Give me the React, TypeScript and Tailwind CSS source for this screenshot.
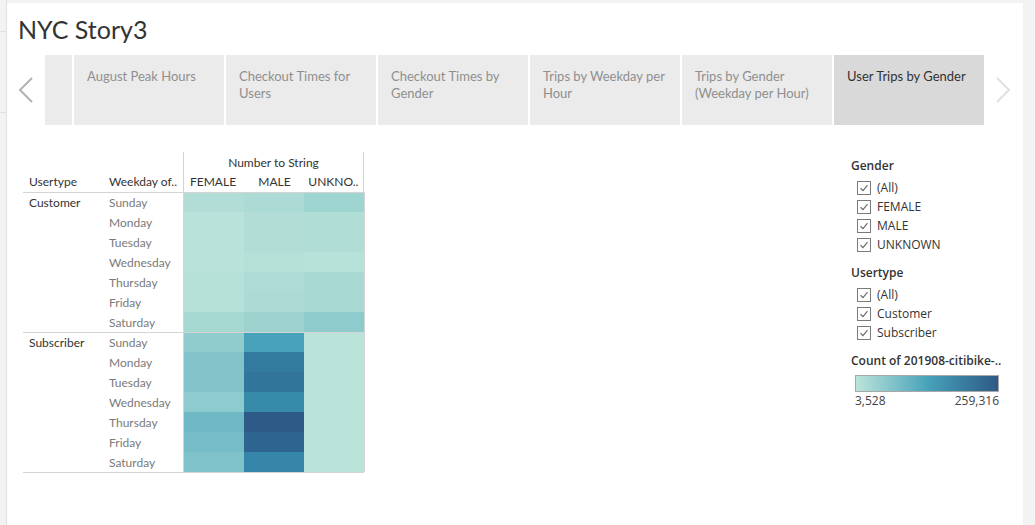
import React from 'react';

const tabs = [
  'August Peak Hours',
  'Checkout Times for Users',
  'Checkout Times by Gender',
  'Trips by Weekday per Hour',
  'Trips by Gender (Weekday per Hour)',
  'User Trips by Gender',
];

const days = ['Sunday', 'Monday', 'Tuesday', 'Wednesday', 'Thursday', 'Friday', 'Saturday'];

// [female, male, unknown] per weekday
const groups = [
  {
    name: 'Customer',
    cells: [
      ['#b2ddd6', '#acdbd5', '#9fd5d1'],
      ['#b9e3da', '#b2ddd6', '#b0ddd6'],
      ['#b9e3da', '#b1ddd6', '#b0ddd6'],
      ['#b9e3da', '#b4e0d8', '#b7e2d9'],
      ['#b6e1d8', '#addbd5', '#a9d9d3'],
      ['#b5e1d8', '#acdbd5', '#a9d9d3'],
      ['#a6d8d2', '#9dd2cf', '#8ecbcd'],
    ],
  },
  {
    name: 'Subscriber',
    cells: [
      ['#90cbce', '#48a3ba', '#bae4da'],
      ['#82c4ca', '#327a9e', '#bae4da'],
      ['#82c4ca', '#31759a', '#bae4da'],
      ['#8ecbcf', '#368aaa', '#bae4da'],
      ['#6fb9c6', '#2d5a86', '#bae4da'],
      ['#76bdc8', '#2e6590', '#bae4da'],
      ['#7fc2ca', '#3686aa', '#bae4da'],
    ],
  },
];

function Check({ label }: { label: string }) {
  return (
    <div className="flex items-center h-[19px] pl-[6px] gap-[6px]">
      <svg width="14" height="14" viewBox="0 0 14 14">
        <rect x="0.5" y="0.5" width="13" height="13" fill="white" stroke="#7a7a7a" />
        <path d="M3.5 7.2 L6 9.6 L10.5 4.2" fill="none" stroke="#6b6b6b" strokeWidth="1.2" />
      </svg>
      <span className="text-[12px] text-[#333]">{label}</span>
    </div>
  );
}

export default function App() {
  return (
    <div className="h-[525px] w-full flex bg-[#f3f3f3]" style={{ fontFamily: '"Open Sans", sans-serif' }}>
      {/* left rail */}
      <div className="w-[7px] shrink-0 border-r border-[#e0e0e0] flex flex-col">
        <div className="h-[32px] border-b border-[#e0e0e0]" />
        <div className="h-[81px] border-b border-[#e0e0e0]" />
      </div>

      <div className="flex-1 mt-[3px] bg-white flex flex-col">
        <h1 className="pl-[11px] pt-[11px] text-[25px] leading-[30px] text-[#333]" style={{ fontFamily: 'Lato, sans-serif' }}>
          NYC Story3
        </h1>

        {/* story navigator */}
        <div className="mt-[11px] flex items-center h-[70px]" style={{ fontFamily: 'Lato, sans-serif' }}>
          <div className="w-[38px] flex justify-center">
            <svg width="18" height="28" viewBox="0 0 18 28">
              <path d="M15 2 L3 14 L15 26" fill="none" stroke="#b3b3b3" strokeWidth="2" />
            </svg>
          </div>
          <div className="w-[27px] h-full bg-[#ebebeb] mr-[2px]" />
          <div className="flex gap-[2px] h-full">
            {tabs.map((t, i) => (
              <div
                key={t}
                className={`w-[150px] h-full pl-[13px] pr-[10px] pt-[13px] text-[13px] leading-[17px] ${
                  i === tabs.length - 1 ? 'bg-[#d9d9d9] text-[#333]' : 'bg-[#ebebeb] text-[#8f8f8f]'
                }`}
              >
                {t}
              </div>
            ))}
          </div>
          <div className="w-[38px] flex justify-center">
            <svg width="18" height="28" viewBox="0 0 18 28">
              <path d="M3 2 L15 14 L3 26" fill="none" stroke="#e0e0e0" strokeWidth="2" />
            </svg>
          </div>
        </div>

        {/* content */}
        <div className="mt-[27px] flex justify-between pl-[16px] pr-[24px]">
          {/* crosstab */}
          <div className="text-[12px] leading-[20px]" style={{ fontFamily: 'Lato, sans-serif' }}>
            <div className="flex">
              <div className="w-[160px] flex flex-col justify-end">
                <div className="flex text-[#333]">
                  <div className="w-[80px] pl-[6px]">Usertype</div>
                  <div className="w-[80px] pl-[6px]">Weekday of..</div>
                </div>
              </div>
              <div className="w-[181px] border-l border-r border-[#d4d4d4]">
                <div className="h-[20px] text-center text-[#333] pt-[1px]">Number to String</div>
                <div className="flex text-[#333]">
                  <div className="w-[60px] pl-[6px]">FEMALE</div>
                  <div className="w-[60px] text-center pl-[2px]">MALE</div>
                  <div className="w-[60px] pl-[5px]">UNKNO..</div>
                </div>
              </div>
            </div>
            {groups.map((g) => (
              <div key={g.name} className="flex h-[140px] border-t border-[#d4d4d4]">
                <div className="w-[80px] pl-[6px] text-[#333]">{g.name}</div>
                <div className="w-[80px]">
                  {days.map((d) => (
                    <div key={d} className="h-[20px] pl-[6px] text-[#7a7a7a]">{d}</div>
                  ))}
                </div>
                <div className="border-l border-r border-[#d4d4d4]">
                  {g.cells.map((row, r) => (
                    <div key={r} className={`flex ${r === 0 ? 'h-[19px]' : 'h-[20px]'}`}>
                      {row.map((c, k) => (
                        <div key={k} className="w-[60px] h-full" style={{ backgroundColor: c }} />
                      ))}
                    </div>
                  ))}
                </div>
              </div>
            ))}
            <div className="w-[341px] border-t border-[#d4d4d4]" />
          </div>

          {/* legends */}
          <div className="w-[148px] pt-[5px] text-[#333]">
            <div className="text-[12px] font-semibold leading-[18px]">Gender</div>
            <div className="mt-[3px]">
              <Check label="(All)" />
              <Check label="FEMALE" />
              <Check label="MALE" />
              <Check label="UNKNOWN" />
            </div>
            <div className="mt-[10px] text-[12px] font-semibold leading-[18px]">Usertype</div>
            <div className="mt-[3px]">
              <Check label="(All)" />
              <Check label="Customer" />
              <Check label="Subscriber" />
            </div>
            <div className="mt-[10px] text-[12px] font-semibold leading-[18px] whitespace-nowrap">Count of 201908-citibike-..</div>
            <div className="mt-[5px] ml-[4px] w-[144px] h-[17px] border border-[#a8a8a8] bg-gradient-to-r from-[#bae4da] via-[#48a3ba] to-[#2d5a86]" />
            <div className="ml-[4px] w-[144px] flex justify-between text-[12px] leading-[18px] text-[#444]">
              <span>3,528</span>
              <span>259,316</span>
            </div>
          </div>
        </div>
      </div>

      {/* right rail */}
      <div className="w-[12px] shrink-0" />
    </div>
  );
}
